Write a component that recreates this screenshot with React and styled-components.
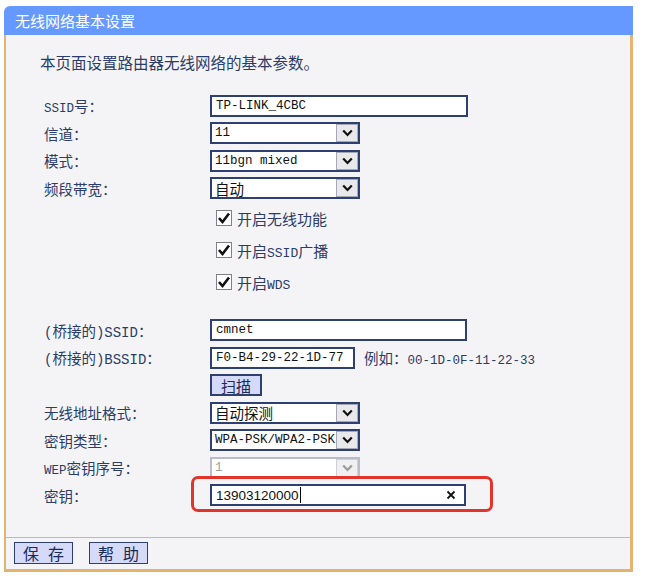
import React from "react";
import styled, { createGlobalStyle } from "styled-components";

const Global = createGlobalStyle`
  html, body { margin: 0; padding: 0; background: #ffffff; }
  body { font-family: "Noto Sans CJK SC", "Liberation Sans", sans-serif; }
  * { box-sizing: border-box; }
`;

const ORANGE = "#e4b36e";
const NAVY = "#2e3f72";
const TEXT = "#2c3c68";

const Panel = styled.div`
  margin: 6px 0 0 4px;
  width: 629px;
  display: flex;
  flex-direction: column;
`;

const Header = styled.div`
  height: 29px;
  background: #6699ff;
  border-top-left-radius: 6px;
  color: #ffffff;
  font-size: 15px;
  padding-left: 11px;
  display: flex;
  align-items: center;
`;

const Body = styled.div`
  background: #f4f4f6;
  border-left: 2px solid ${ORANGE};
  border-right: 3px solid ${ORANGE};
  padding: 17px 0 28.25px 38px;
  display: flex;
  flex-direction: column;
  color: ${TEXT};
`;

const Intro = styled.div`
  font-size: 15.5px;
  line-height: 20px;
  margin: 0 0 19.75px -4px;
`;

const Row = styled.div`
  height: 27.5px;
  display: flex;
  align-items: center;
`;

const Label = styled.div`
  width: 166px;
  flex: none;
  font-size: 14.5px;
  white-space: nowrap;
  color: ${TEXT};
`;

const Latin = styled.span`
  font-family: "Liberation Mono", monospace;
  font-size: ${(p) => p.$size || 13}px;
`;

const Field = styled.div`
  position: relative;
  width: ${(p) => p.$w}px;
  height: 22px;
  border: 2px solid ${NAVY};
  background: #ffffff;
  display: flex;
  align-items: center;
  padding: 0 8px 0 4px;
  font-family: ${(p) =>
    p.$sans ? '"Liberation Sans", sans-serif' : '"Liberation Mono", "Noto Sans CJK SC", monospace'};
  font-size: ${(p) => (p.$sans ? 13.5 : 12.5)}px;
  color: #111111;
  white-space: nowrap;
`;

const FieldText = styled.span`
  flex: 1;
  display: flex;
  align-items: center;
`;

const Caret = styled.span`
  display: inline-block;
  width: 1px;
  height: 16px;
  background: #000;
  margin-left: 1px;
`;

const Highlight = styled.div`
  position: absolute;
  left: -21px;
  top: -10px;
  width: 302px;
  height: 36px;
  border: 3px solid #e3342c;
  border-radius: 7px;
  pointer-events: none;
`;

const SelectBox = styled.div`
  width: 150px;
  height: 22px;
  border: 2px solid ${(p) => (p.$disabled ? "#b9bdc9" : NAVY)};
  background: #ffffff;
  display: flex;
  align-items: center;
`;

const SelectText = styled.div`
  flex: 1;
  min-width: 0;
  overflow: hidden;
  white-space: nowrap;
  padding-left: 3px;
  font-family: "Liberation Mono", "Noto Sans CJK SC", monospace;
  font-size: ${(p) => (p.$cjk ? 14.5 : 12.5)}px;
  color: ${(p) => (p.$disabled ? "#a0a0a0" : "#111111")};
`;

const ArrowBtn = styled.div`
  width: 22px;
  height: 18px;
  flex: none;
  border: 1px solid ${(p) => (p.$disabled ? "#d0d0d4" : "#a6a9b4")};
  background: ${(p) => (p.$disabled ? "#f0f0f0" : "#e9e9ec")};
  display: flex;
  align-items: center;
  justify-content: center;
`;

const CheckGroup = styled.div`
  padding: 0.25px 0 18.25px 172px;
  display: flex;
  flex-direction: column;
`;

const CheckRow = styled.label`
  height: 32px;
  display: flex;
  align-items: center;
  gap: 5px;
  font-size: 15px;
  color: ${TEXT};
`;

const Box = styled.span`
  width: 16px;
  height: 16px;
  border: 1px solid #7f8088;
  background: #ffffff;
  display: flex;
  align-items: center;
  justify-content: center;
`;

const Hint = styled.span`
  margin-left: 9px;
  font-size: 14.5px;
  color: ${TEXT};
`;

const Button = styled.button`
  height: 22px;
  width: ${(p) => p.$w}px;
  padding: 0;
  border: ${(p) => p.$bw || 2}px solid ${NAVY};
  background: #d6daf9;
  color: #1d2a55;
  font-family: "Noto Sans CJK SC", sans-serif;
  font-size: ${(p) => p.$fs || 15}px;
  line-height: 1;
  display: flex;
  align-items: center;
  justify-content: center;
  gap: ${(p) => p.$gap || 0}px;
`;

const Footer = styled.div`
  height: 35px;
  background: #f4f4f6;
  border-top: 1px solid ${ORANGE};
  border-left: 2px solid ${ORANGE};
  border-right: 3px solid ${ORANGE};
  border-bottom: 3px solid ${ORANGE};
  padding: 4px 0 0 8px;
  display: flex;
  align-items: flex-start;
  gap: 16px;
`;

const Chevron = ({ disabled }) => (
  <svg width="11" height="8" viewBox="0 0 11 8">
    <polyline
      points="1.2,1.5 5.5,6 9.8,1.5"
      fill="none"
      stroke={disabled ? "#9a9a9a" : "#111"}
      strokeWidth="2.2"
    />
  </svg>
);

const Select = ({ value, cjk, disabled }) => (
  <SelectBox $disabled={disabled}>
    <SelectText $cjk={cjk} $disabled={disabled}>
      {value}
    </SelectText>
    <ArrowBtn $disabled={disabled}>
      <Chevron disabled={disabled} />
    </ArrowBtn>
  </SelectBox>
);

const Check = ({ children }) => (
  <CheckRow>
    <Box>
      <svg width="14" height="14" viewBox="0 0 14 14">
        <polyline
          points="2,7 5.5,11 12,2.5"
          fill="none"
          stroke="#111"
          strokeWidth="2.6"
        />
      </svg>
    </Box>
    <span>{children}</span>
  </CheckRow>
);

export default function App() {
  return (
    <>
      <Global />
      <Panel>
        <Header>无线网络基本设置</Header>
        <Body>
          <Intro>本页面设置路由器无线网络的基本参数。</Intro>

          <Row>
            <Label>
              <Latin $size={12.5}>SSID</Latin>号：
            </Label>
            <Field $w={258}>
              <FieldText>TP-LINK_4CBC</FieldText>
            </Field>
          </Row>
          <Row>
            <Label>信道：</Label>
            <Select value="11" />
          </Row>
          <Row>
            <Label>模式：</Label>
            <Select value="11bgn mixed" />
          </Row>
          <Row>
            <Label>频段带宽：</Label>
            <Select value="自动" cjk />
          </Row>

          <CheckGroup>
            <Check>开启无线功能</Check>
            <Check>
              开启<Latin $size={13}>SSID</Latin>广播
            </Check>
            <Check>
              开启<Latin $size={13}>WDS</Latin>
            </Check>
          </CheckGroup>

          <Row>
            <Label>
              <Latin $size={14}>(</Latin>桥接的<Latin $size={14}>)SSID</Latin>：
            </Label>
            <Field $w={257}>
              <FieldText>cmnet</FieldText>
            </Field>
          </Row>
          <Row>
            <Label>
              <Latin $size={14}>(</Latin>桥接的<Latin $size={14}>)BSSID</Latin>：
            </Label>
            <Field $w={145}>
              <FieldText>F0-B4-29-22-1D-77</FieldText>
            </Field>
            <Hint>
              例如：<Latin $size={12.5}>00-1D-0F-11-22-33</Latin>
            </Hint>
          </Row>
          <Row>
            <Label />
            <Button $w={52}>扫描</Button>
          </Row>
          <Row>
            <Label>无线地址格式：</Label>
            <Select value="自动探测" cjk />
          </Row>
          <Row>
            <Label>密钥类型：</Label>
            <Select value="WPA-PSK/WPA2-PSK" />
          </Row>
          <Row>
            <Label>
              <Latin $size={12.5}>WEP</Latin>密钥序号：
            </Label>
            <Select value="1" disabled />
          </Row>
          <Row>
            <Label>密钥：</Label>
            <Field $w={256} $sans>
              <FieldText>
                13903120000
                <Caret />
              </FieldText>
              <svg width="10" height="10" viewBox="0 0 10 10">
                <path d="M1.5 1.5 L8.5 8.5 M8.5 1.5 L1.5 8.5" stroke="#111" strokeWidth="1.8" />
              </svg>
              <Highlight />
            </Field>
          </Row>
        </Body>
        <Footer>
          <Button $w={59} $bw={1.5} $fs={16} $gap={9}>
            <span>保</span>
            <span>存</span>
          </Button>
          <Button $w={59} $bw={1.5} $fs={16} $gap={9}>
            <span>帮</span>
            <span>助</span>
          </Button>
        </Footer>
      </Panel>
    </>
  );
}
